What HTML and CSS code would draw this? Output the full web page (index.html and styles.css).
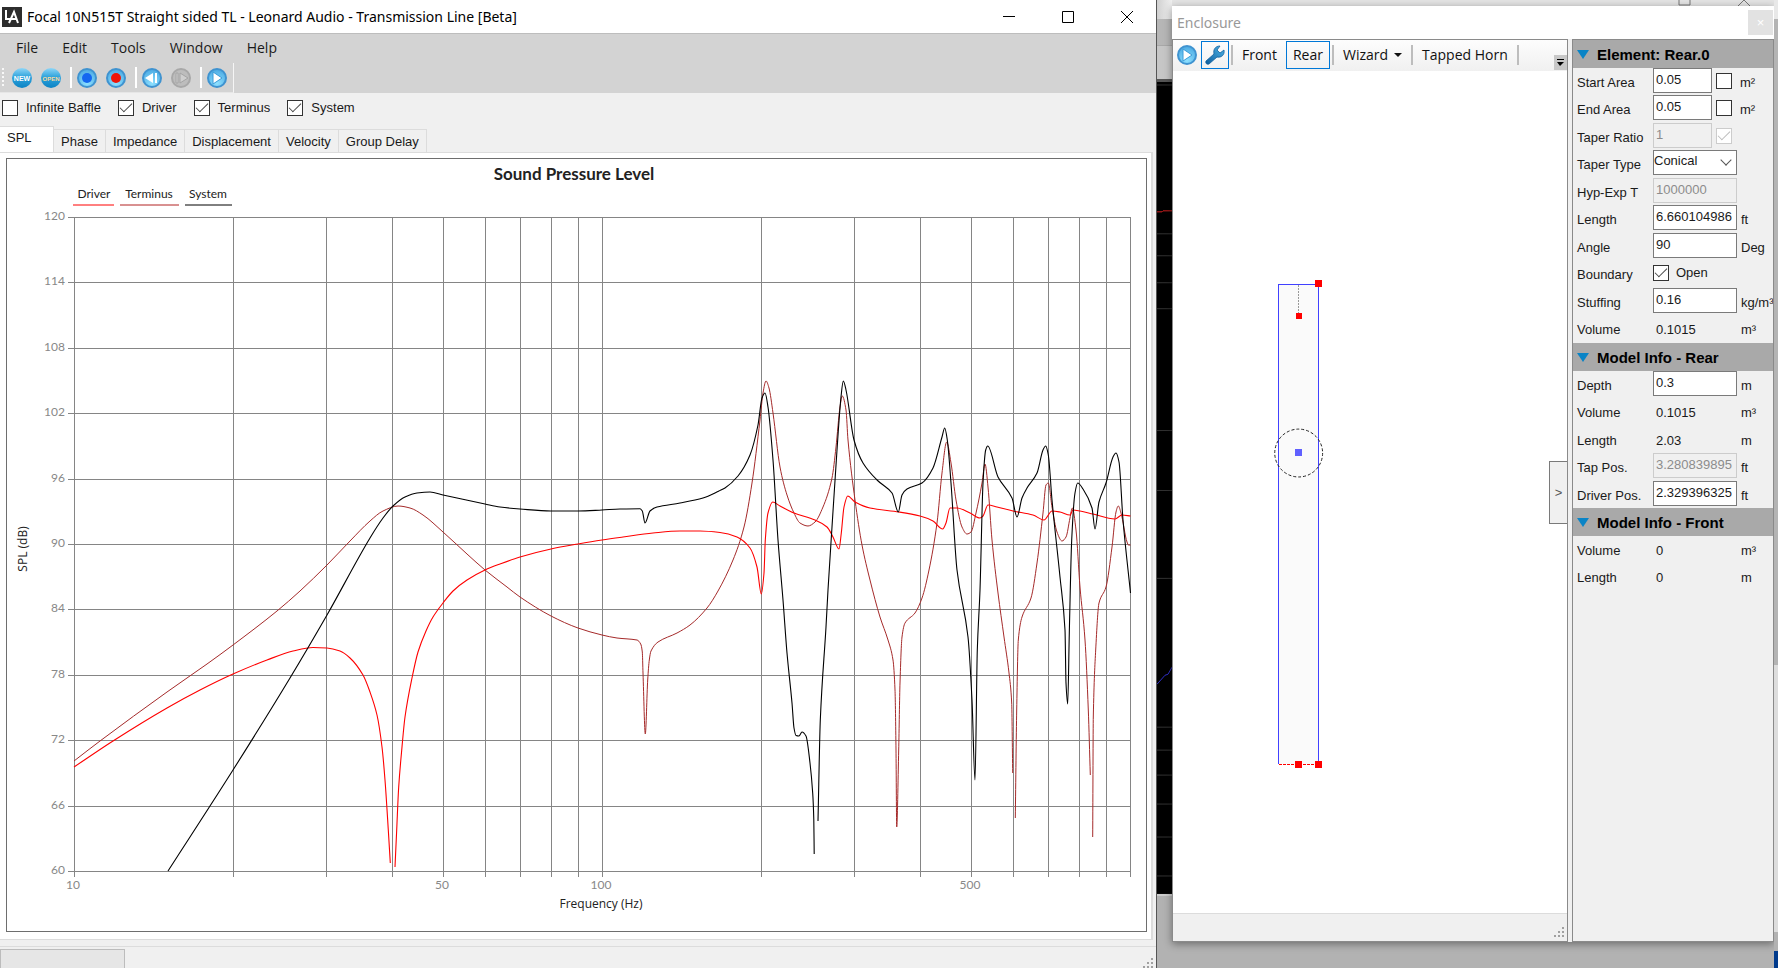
FILE: index.html
```html
<!DOCTYPE html>
<html lang="en">
<head>
    <meta charset="UTF-8">
    <meta name="viewport" content="width=device-width, initial-scale=1.0">
    <title>Leonard Audio - Transmission Line</title>
    <link rel="stylesheet" href="styles.css">
</head>
<body>
    <!-- shared gradients for the round toolbar icons -->
    <svg class="defs" aria-hidden="true">
        <defs>
            <linearGradient id="g-solid" x1="0" y1="0" x2="0" y2="1">
                <stop offset="0" stop-color="#8fd6f7"/>
                <stop offset="0.45" stop-color="#2fa3dc"/>
                <stop offset="1" stop-color="#0c83c4"/>
            </linearGradient>
            <radialGradient id="g-light" cx="0.5" cy="0.8" r="0.8">
                <stop offset="0" stop-color="#8ee0ff"/>
                <stop offset="1" stop-color="#4aa9e2"/>
            </radialGradient>
            <linearGradient id="g-wrench" x1="0" y1="1" x2="1" y2="0">
                <stop offset="0" stop-color="#0d5c9c"/>
                <stop offset="1" stop-color="#4fb4e6"/>
            </linearGradient>
        </defs>
    </svg>

    <div class="desktop">
        <main class="window main-window">
            <header class="title-bar">
                <svg class="app-icon" viewBox="0 0 20 20">
                    <rect width="20" height="20" fill="#2d2d2d"/>
                    <path d="M4 3v9h5M7 16l5-11 4 11M9 12h6" fill="none" stroke="#fff" stroke-width="2"/>
                </svg>
                <h1>Focal 10N515T Straight sided TL - Leonard Audio - Transmission Line [Beta]</h1>
                <div class="caption-buttons">
                    <button aria-label="Minimize"><svg viewBox="0 0 14 14"><path d="M1 6.500h12"/></svg></button>
                    <button aria-label="Maximize"><svg viewBox="0 0 14 14"><path d="M1.500 1.500h11v11h-11z"/></svg></button>
                    <button aria-label="Close"><svg viewBox="0 0 14 14"><path d="M1 1l12 12M13 1L1 13"/></svg></button>
                </div>
            </header>

            <nav class="menu-bar">
                <button>File</button>
                <button>Edit</button>
                <button>Tools</button>
                <button>Window</button>
                <button>Help</button>
            </nav>

            <div class="tool-area">
                <div class="tool-strip">
                    <span class="grip"></span>
                    <button aria-label="New">
                        <svg viewBox="0 0 20 20"><circle cx="10" cy="10" r="10" fill="url(#g-solid)"/><text x="10" y="13" class="icon-text">NEW</text></svg>
                    </button>
                    <button aria-label="Open">
                        <svg viewBox="0 0 20 20"><circle cx="10" cy="10" r="10" fill="url(#g-solid)"/><text x="10" y="13" class="icon-text open">OPEN</text></svg>
                    </button>
                    <span class="separator"></span>
                    <button aria-label="Stop">
                        <svg viewBox="0 0 20 20"><circle cx="10" cy="10" r="9" fill="url(#g-light)" stroke="#3f93d0" stroke-width="2"/><circle cx="10" cy="10" r="5" fill="#1467f0"/></svg>
                    </button>
                    <button aria-label="Record">
                        <svg viewBox="0 0 20 20"><circle cx="10" cy="10" r="9" fill="url(#g-light)" stroke="#3f93d0" stroke-width="2"/><circle cx="10" cy="10" r="5" fill="#ee1408"/></svg>
                    </button>
                    <span class="separator"></span>
                    <button aria-label="Step back">
                        <svg viewBox="0 0 20 20"><circle cx="10" cy="10" r="9" fill="url(#g-light)" stroke="#3f93d0" stroke-width="2"/><path d="M3 10l8-5v10zM13 5h2v10h-2z" fill="#fff"/></svg>
                    </button>
                    <button aria-label="Step forward" disabled>
                        <svg viewBox="0 0 20 20"><circle cx="10" cy="10" r="9" fill="#bdbdbd" stroke="#a8a8a8" stroke-width="2"/><path d="M9 5l8 5-8 5zM5 5h2v10H5z" fill="#cfcfcf" stroke="#a4a4a4"/></svg>
                    </button>
                    <span class="separator"></span>
                    <button aria-label="Play">
                        <svg viewBox="0 0 20 20"><circle cx="10" cy="10" r="9" fill="url(#g-light)" stroke="#3f93d0" stroke-width="2"/><path d="M6 4l9 6-9 6z" fill="#fff" stroke="#3a9bd8"/></svg>
                    </button>
                </div>
            </div>

            <div class="trace-options">
                <label><input type="checkbox">Infinite Baffle</label>
                <label><input type="checkbox" checked>Driver</label>
                <label><input type="checkbox" checked>Terminus</label>
                <label><input type="checkbox" checked>System</label>
            </div>

            <div class="tabs" role="tablist">
                <button role="tab" aria-selected="true" class="active">SPL</button>
                <button role="tab">Phase</button>
                <button role="tab">Impedance</button>
                <button role="tab">Displacement</button>
                <button role="tab">Velocity</button>
                <button role="tab">Group Delay</button>
            </div>

            <section class="tab-page">
                <div class="chart-frame">
                    <svg id="chart" viewBox="7 159 1139 772">
                        <text class="chart-title" x="574" y="180">Sound Pressure Level</text>
                        <g class="legend">
                            <text x="94" y="198">Driver</text>
                            <text x="149" y="198">Terminus</text>
                            <text x="208" y="198">System</text>
                            <path d="M73 205h41" stroke="#ff0000"/>
                            <path d="M120 205h59" stroke="#b22222"/>
                            <path d="M185 205h47" stroke="#000000"/>
                        </g>
                        <g id="grid"></g>
                        <g id="traces"></g>
                        <text class="axis-title" x="601" y="908">Frequency (Hz)</text>
                        <text class="axis-title" x="0" y="0" transform="translate(27 549) rotate(-90)">SPL (dB)</text>
                    </svg>
                </div>
            </section>

            <footer class="status-bar">
                <span class="progress"></span>
                <svg class="size-grip" viewBox="0 0 12 12"><path d="M9 1h2v2H9zM5 5h2v2H5zM9 5h2v2H9zM1 9h2v2H1zM5 9h2v2H5zM9 9h2v2H9z"/></svg>
            </footer>
        </main>

        <!-- slice of the analyser window that shows between the two windows -->
        <div class="analyser">
            <div class="analyser-title"></div>
            <div class="analyser-bar"></div>
            <svg viewBox="0 82 15 813" preserveAspectRatio="none">
                <rect y="82" width="15" height="813" fill="#000"/>
                <path d="M0 85h15M0 234h15M0 256h15M0 283h15M0 309h15M0 431h15M0 491h15M0 579h15M0 728h15M0 751h15M0 776h15M0 805h15M0 838h15M0 877h15" stroke="#333"/>
                <path d="M0 212h5l1-1h9" stroke="#d02020" fill="none"/>
                <path d="M0 685l8-9 3-1 4-7" stroke="#3030c8" fill="none"/>
            </svg>
        </div>

        <div class="enclosure-column">
            <div class="behind-title">
                <svg viewBox="0 0 72 6"><path d="M1 0v5h11V0M60 6l6-6 6 6" fill="none" stroke="#777"/></svg>
            </div>
            <aside class="window enclosure">
                <header class="title-bar">
                    <h2>Enclosure</h2>
                    <button class="ghost-close" aria-label="Close">×</button>
                </header>
                <div class="enclosure-body">
                    <div class="model-pane">
                        <div class="model-tools">
                            <button class="icon" aria-label="Run">
                                <svg viewBox="0 0 20 20"><circle cx="10" cy="10" r="9" fill="url(#g-light)" stroke="#3f93d0" stroke-width="2"/><path d="M6 4l9 6-9 6z" fill="#fff" stroke="#3a9bd8"/></svg>
                            </button>
                            <button class="icon selected" aria-label="Settings">
                                <svg viewBox="0 0 20 20"><path d="M1 16L9 9C8 5 10 1 15 1L12 5l3 3 4-3c1 5-3 8-7 7l-8 7c-2 1-4-1-3-3z" fill="url(#g-wrench)" stroke="#0f5f9e" stroke-width="0.800"/></svg>
                            </button>
                            <span class="separator"></span>
                            <button>Front</button>
                            <button class="selected">Rear</button>
                            <span class="separator"></span>
                            <button class="menu">Wizard<span class="caret"></span></button>
                            <span class="separator"></span>
                            <button>Tapped Horn</button>
                            <span class="separator"></span>
                            <button class="overflow" aria-label="More"><svg viewBox="0 0 13 15"><path d="M3 4h7v1H3zM3 7h7l-4 4z"/></svg></button>
                        </div>
                        <div class="model-canvas">
                            <svg viewBox="1173 70 395 842" preserveAspectRatio="xMinYMin meet">
                                <rect x="1279" y="284" width="40" height="481" fill="#fafafa"/>
                                <path d="M1279 765V284H1319V765" fill="none" stroke="#4040ff"/>
                                <path d="M1279 765h40" stroke="#ff0000" stroke-dasharray="3 1"/>
                                <path d="M1299 285v28" stroke="#999" stroke-dasharray="2 1"/>
                                <circle cx="1299" cy="453" r="24" fill="none" stroke="#222" stroke-dasharray="3 2"/>
                                <g fill="#ff0000">
                                    <rect x="1315" y="280" width="7" height="7"/>
                                    <rect x="1296" y="313" width="6" height="6"/>
                                    <rect x="1295" y="762" width="7" height="7"/>
                                    <rect x="1315" y="762" width="7" height="7"/>
                                </g>
                                <rect x="1295" y="449" width="7" height="7" fill="#6060ff"/>
                            </svg>
                            <button class="expander" aria-label="Expand">&gt;</button>
                        </div>
                        <footer class="model-status">
                            <svg class="size-grip" viewBox="0 0 12 12"><path d="M9 1h2v2H9zM5 5h2v2H5zM9 5h2v2H9zM1 9h2v2H1zM5 9h2v2H5zM9 9h2v2H9z"/></svg>
                        </footer>
                    </div>

                    <form class="properties">
                        <h3><span class="fold"></span>Element: Rear.0</h3>
                        <div class="rows">
                            <div class="row"><label for="start">Start Area</label><input id="start" class="short" value="0.05"><input type="checkbox" aria-label="Lock start area"><span class="unit">m²</span></div>
                            <div class="row"><label for="end">End Area</label><input id="end" class="short" value="0.05"><input type="checkbox" aria-label="Lock end area"><span class="unit">m²</span></div>
                            <div class="row"><label for="ratio">Taper Ratio</label><input id="ratio" class="short" value="1" disabled><input type="checkbox" aria-label="Lock taper ratio" checked disabled></div>
                            <div class="row"><label for="type">Taper Type</label><span class="select"><select id="type"><option>Conical</option></select></span></div>
                            <div class="row"><label for="hyp">Hyp-Exp T</label><input id="hyp" value="1000000" disabled></div>
                            <div class="row"><label for="length">Length</label><input id="length" value="6.660104986"><span class="unit">ft</span></div>
                            <div class="row"><label for="angle">Angle</label><input id="angle" value="90"><span class="unit">Deg</span></div>
                            <div class="row"><label for="open">Boundary</label><input type="checkbox" id="open" checked><label class="tick-label" for="open">Open</label></div>
                            <div class="row"><label for="stuffing">Stuffing</label><input id="stuffing" value="0.16"><span class="unit">kg/m³</span></div>
                            <div class="row"><span class="name">Volume</span><output>0.1015</output><span class="unit">m³</span></div>
                        </div>
                        <h3><span class="fold"></span>Model Info - Rear</h3>
                        <div class="rows">
                            <div class="row"><label for="depth">Depth</label><input id="depth" value="0.3"><span class="unit">m</span></div>
                            <div class="row"><span class="name">Volume</span><output>0.1015</output><span class="unit">m³</span></div>
                            <div class="row"><span class="name">Length</span><output>2.03</output><span class="unit">m</span></div>
                            <div class="row"><label for="tap">Tap Pos.</label><input id="tap" value="3.280839895" disabled><span class="unit">ft</span></div>
                            <div class="row"><label for="driver-pos">Driver Pos.</label><input id="driver-pos" value="2.329396325"><span class="unit">ft</span></div>
                        </div>
                        <h3><span class="fold"></span>Model Info - Front</h3>
                        <div class="rows">
                            <div class="row"><span class="name">Volume</span><output>0</output><span class="unit">m³</span></div>
                            <div class="row"><span class="name">Length</span><output>0</output><span class="unit">m</span></div>
                        </div>
                    </form>
                </div>
            </aside>
        </div>

        <div class="right-edge"></div>
    </div>

    <script src="chart.js"></script>
</body>
</html>
```
FILE: chart.js
```js
const NS = 'http://www.w3.org/2000/svg';
const plot = { left: 74, right: 1130, top: 217, bottom: 871 };

function add(parent, tag, attrs, text) {
    const el = document.createElementNS(NS, tag);
    for (const key in attrs) {
        el.setAttribute(key, attrs[key]);
    }
    if (text !== undefined) {
        el.textContent = text;
    }
    parent.appendChild(el);
}

// Log frequency scale, 10 Hz to 1 kHz
function freqToX(f) {
    return Math.round(plot.left + (plot.right - plot.left) * Math.log10(f / 10) / 2);
}

function dbToY(db) {
    return Math.round(plot.bottom - (plot.bottom - plot.top) * (db - 60) / 60);
}

function drawGrid() {
    const grid = document.getElementById('grid');
    for (let db = 60; db <= 120; db += 6) {
        const y = dbToY(db);
        add(grid, 'path', { d: `M${plot.left - 6} ${y}H${plot.right}` });
        add(grid, 'text', { x: 65, y: y + 3, class: 'y-label' }, db);
    }
    for (const decade of [10, 100]) {
        for (let i = 1; i < 10; i++) {
            const x = freqToX(decade * i);
            add(grid, 'path', { d: `M${x} ${plot.top}V${plot.bottom + 6}` });
            if (i === 1 || i === 5) {
                add(grid, 'text', { x: x - 1, y: 889, class: 'x-label' }, decade * i);
            }
        }
    }
    add(grid, 'path', { d: `M${plot.right} ${plot.top}V${plot.bottom + 6}` });
}

// Monotone cubic through the points so the notches do not overshoot
function smooth(points) {
    const n = points.length;
    const slope = [];
    for (let i = 0; i < n - 1; i++) {
        slope.push((points[i + 1][1] - points[i][1]) / (points[i + 1][0] - points[i][0]));
    }
    const tangent = [slope[0]];
    for (let i = 1; i < n - 1; i++) {
        const a = slope[i - 1], b = slope[i];
        tangent.push(a * b <= 0 ? 0 : 2 * a * b / (a + b));
    }
    tangent.push(slope[n - 2]);
    let d = `M${points[0][0]} ${points[0][1]}`;
    for (let i = 0; i < n - 1; i++) {
        const [x0, y0] = points[i];
        const [x1, y1] = points[i + 1];
        const h = (x1 - x0) / 3;
        d += `C${x0 + h} ${y0 + tangent[i] * h} ${x1 - h} ${y1 - tangent[i + 1] * h} ${x1} ${y1}`;
    }
    return d;
}

// Each string is one unbroken run of x,y points
const traces = [
    { color: '#a52a2a', width: 1, runs: [
        '74,761 100,741 167,692 207,664 233,645 277,611 300,591 327,565 350,541 370,521 383,511 398,506 410,508 423,515 443,532 467,554 485,570 507,587 520,597 551,616 578,628 602,635 617,638 637,640 640.7,644 642.3,652 643,673 645.3,734 647.7,680 649.3,660 651,651 658,642 677,633 690,625 707,608 718,591 733,560 744,527 752,483 760,420 763,393 766,381 769,388 773,413 780,467 787,495 794,513 800,523 808,526 815,522 823,507 832,478 836,447 840,407 842.3,396 846,410 848,440 855,500 862,545 870,580 880,617 888,640 893,660 895,690 896,750 896.7,827 898.7,750 900,683 902,637 905,623 915,613 922,598 929,570 937,523 942,473 946.7,442 951,463 956,500 962,527 967,534 971,532 976,513 982,483 985,464 988,487 992,540 998,593 1004,637 1009,673 1011.7,703 1012.7,773',
        '1015.3,818 1016.7,710 1018.3,640 1022,617 1031,598 1037,563 1043,513 1046,485 1048.3,483 1052,507 1057,532 1062,541 1066,537 1070,518 1072.3,508 1076,530 1080,587 1085,640 1088.3,710 1090.3,775',
        '1092.7,837 1093.3,717 1095.7,650 1099,603 1106,587 1112,547 1116,512 1118.3,506 1121,513 1127,542 1128.5,545 1130.5,545'
    ] },
    { color: '#ff0000', width: 1.1, runs: [
        '74,767 113,741 167,708 200,690 233,674 267,660 293,651 313,647.5 327,648 340,651 350,658 363,675 370,692 377,715 382,747 385,780 388.3,830 390.3,863',
        '395,867 396.7,830 398.7,787 402,747 405,717 412,678 418,652 426,631 433,617 443,603 453,591 467,580 485,570 500,564 520,557 551,549 578,544 602,540 623,537 653,533 680,531 700,531 720,532.5 737,537 750,548 757,567 761.3,594 764,573 765.3,540 768,513 772.7,502 780,506 794,513 815,520 827,527 833,537 839,549 841.3,533 844,507 847.7,496 855,502 870,508 899,512 920,516 933,521 942.7,529 946,523 950,508 957,508 970,513 980,518 983,516 988,505 997,507 1013,511 1033,515 1044,520 1052,511 1060,512 1070,515 1073,510 1080,511 1093,514 1115,519 1122,515 1130.5,516'
    ] },
    { color: '#000000', width: 1.1, runs: [
        '168,871 233,770 290,678 327,615 370,538 383,518 393,506 405,497 417,493 430,492 443,495 485,504 500,507 520,509 551,511 578,511 602,510 620,509 640,508.7 642.3,511 645,523 650,511 657,507 680,503 703,498 719,491 725,488 738,476 750,455 758,425 762,398 765,393 768,407 773,460 778,540 783,600 787,653 792,703 794,728 796,735.5 799,736 802,732 806,736 810,763 812.7,793 813.8,820 814.2,854',
        '818,821 820.3,720 826,627 828,590 832,527 837,450 841,397 843.3,381 846,390 854,440 863,463 877,480 892,493 898.3,512 902,495 907,489 922,483 933,468 942,437 944.7,428 947.3,440 951,483 957,570 968,637 972,700 975,780 977.3,650 980,590 983,483 985.7,450 987.7,446 998,477 1012,498 1017,517 1022,498 1027,488 1037,473 1043,450 1045.7,446 1048.3,455 1052,500 1060,577 1065,630 1066,683 1067.7,704 1069.3,633 1071.7,540 1075,493 1077.7,483 1083,489 1092,508 1095,529 1099,502 1106,483 1113,457 1116,453 1119,462 1123,520 1130.5,593'
    ] }
];

function drawTraces() {
    const group = document.getElementById('traces');
    for (const trace of traces) {
        for (const run of trace.runs) {
            const points = run.split(' ').map(p => p.split(',').map(Number));
            add(group, 'path', { d: smooth(points), stroke: trace.color, 'stroke-width': trace.width });
        }
    }
}

drawGrid();
drawTraces();
```
FILE: styles.css
```css
* {
    box-sizing: border-box;
}

body {
    margin: 0;
    background: #b2b2b2;
    color: #1a1a1a;
    font: 13px "Liberation Sans", Arial, sans-serif;
    overflow: hidden;
}

h1, h2, h3 {
    margin: 0;
    font-weight: normal;
}

button {
    border: 1px solid transparent;
    padding: 0;
    background: none;
    color: inherit;
    font: inherit;
}

.defs {
    position: absolute;
    width: 0;
    height: 0;
}

.desktop {
    display: grid;
    grid-template-columns: minmax(0, 1157fr) 15px minmax(0, 602fr) 4px;
    height: 100vh;
}

.window {
    display: flex;
    flex-direction: column;
    background: #f0f0f0;
}

.title-bar {
    display: flex;
    align-items: center;
    background: #fff;
}

.title-bar h1, .title-bar h2 {
    flex: 1;
    font: 14px "Noto Sans", "Open Sans", sans-serif;
    white-space: nowrap;
}

.separator {
    flex: none;
    width: 2px;
}

/* Main window */
.main-window {
    border-right: 1px solid #555;
}

.main-window .title-bar {
    height: 33px;
    padding-left: 2px;
}

.main-window h1 {
    color: #000;
}

.app-icon {
    width: 20px;
    height: 20px;
    margin-right: 5px;
}

.caption-buttons {
    display: flex;
}

.caption-buttons button {
    display: grid;
    place-items: center;
    width: 59px;
    height: 32px;
}

.caption-buttons svg {
    width: 14px;
    height: 14px;
    fill: none;
    stroke: #000;
}

.menu-bar {
    display: flex;
    gap: 22px;
    height: 30px;
    padding: 0 15px 2px;
    border-top: 1px solid #bdbdbd;
    background: #d3d3d3;
    font: 14px "Open Sans", sans-serif;
}

.tool-area {
    height: 30px;
    background: #d3d3d3;
}

.tool-strip {
    display: flex;
    align-items: center;
    gap: 9px;
    width: 234px;
    height: 30px;
    padding-left: 2px;
    border-right: 1px solid #f5f5f5;
    border-bottom: 1px solid #e6e6e6;
}

.tool-strip button {
    flex: none;
    width: 20px;
    height: 20px;
    border: 0;
}

.tool-strip svg {
    display: block;
    width: 20px;
    height: 20px;
}

.tool-strip .separator {
    height: 21px;
    margin-right: -5px;
    background: #fff;
}

.tool-strip .separator + button {
    margin-left: 1px;
}

.grip {
    width: 2px;
    height: 20px;
    margin-right: -1px;
    background: repeating-linear-gradient(#f8f8f8 0 2px, transparent 2px 4px);
}

.icon-text {
    fill: #fff;
    font: bold 7px "Liberation Sans", sans-serif;
    text-anchor: middle;
}

.icon-text.open {
    fill: #f5d9a0;
    font-size: 6px;
}

/* Check boxes */
input[type="checkbox"] {
    appearance: none;
    flex: none;
    display: grid;
    place-items: center;
    width: 16px;
    height: 16px;
    margin: 0;
    border: 1px solid #333;
    background: #fff;
}

input[type="checkbox"]:checked::before {
    content: "";
    width: 11px;
    height: 5px;
    margin-top: -4px;
    border: solid #444;
    border-width: 0 0 1px 1px;
    transform: rotate(-45deg);
}

input[type="checkbox"]:disabled {
    border-color: #ccc;
}

input[type="checkbox"]:disabled::before {
    border-color: #bbb;
}

.trace-options {
    display: flex;
    gap: 17px;
    height: 33px;
    padding: 6px 2px 0;
}

.trace-options label {
    display: flex;
    gap: 8px;
    height: 17px;
    align-items: center;
}

/* Tabs */
.tabs {
    display: flex;
    align-items: flex-end;
    height: 26px;
}

.tabs button {
    height: 23px;
    padding: 0 7px;
    border: 1px solid #dcdcdc;
    border-width: 1px 1px 0 0;
}

.tabs .active {
    width: 54px;
    height: 26px;
    padding-bottom: 4px;
    background: #fff;
    text-align: left;
}

.tab-page {
    flex: 1;
    min-height: 0;
    margin-right: 3px;
    padding: 5px 4px 7px 6px;
    border: solid #dcdcdc;
    border-width: 1px 2px 1px 0;
    background: #fff;
}

.chart-frame {
    height: 100%;
    border: 1px solid #6e6e6e;
}

#chart {
    display: block;
    width: 100%;
    height: 100%;
    font: 12px Lato, sans-serif;
}

#chart text {
    fill: #222;
    text-anchor: middle;
}

#chart .chart-title {
    font-size: 17px;
    font-weight: bold;
}

#chart .axis-title {
    font-family: "Open Sans", sans-serif;
}

#chart .y-label {
    fill: #888;
    text-anchor: end;
}

#chart .x-label {
    fill: #888;
}

#grid path {
    stroke: #858585;
    shape-rendering: crispEdges;
}

#traces path {
    fill: none;
    stroke-linejoin: round;
}

.status-bar {
    display: flex;
    height: 23px;
    margin-top: 6px;
    padding-top: 2px;
    border-top: 1px solid #dcdcdc;
}

.progress {
    width: 125px;
    border: 1px solid #bcbcbc;
    background: #e6e6e6;
}

.size-grip {
    width: 12px;
    height: 12px;
    margin: auto 2px 0 auto;
    fill: #a0a0a0;
}

/* Window behind */
.analyser {
    display: flex;
    flex-direction: column;
}

.analyser-title {
    height: 19px;
    background: linear-gradient(90deg, #d0d0d0, #f0f0f0);
}

.analyser-bar {
    height: 63px;
    border-bottom: 3px solid #555;
    background: linear-gradient(#b6b6b6 26px, #a8a8a8 26px, #a8a8a8 27px, #c6c6c6 27px);
}

.analyser svg {
    width: 15px;
    flex: 0 1 84%;
    border-bottom: 2px solid #ccc;
}

.enclosure-column {
    display: flex;
    flex-direction: column;
    min-width: 0;
}

.behind-title {
    display: flex;
    justify-content: flex-end;
    height: 6px;
    padding-right: 24px;
    background: #e4e4e4;
}

.behind-title svg {
    width: 72px;
    height: 6px;
}

/* Enclosure window */
.enclosure {
    flex: 1;
    min-height: 0;
    margin-bottom: 27px;
    box-shadow: 0 2px 8px rgba(0, 0, 0, 0.4);
}

.enclosure .title-bar {
    height: 33px;
    padding-left: 5px;
}

.enclosure h2 {
    color: #999;
}

.ghost-close {
    align-self: flex-start;
    width: 25px;
    height: 25px;
    margin: 4px 1px 0 0;
    background: #e2e2e2;
    color: #fff;
}

.enclosure-body {
    flex: 1;
    display: flex;
    gap: 4px;
    min-height: 0;
}

.model-pane {
    flex: 1;
    display: flex;
    flex-direction: column;
    min-width: 0;
    border: 1px solid #8a8a8a;
}

.model-tools {
    display: flex;
    align-items: center;
    gap: 2px;
    height: 31px;
    padding: 0 0 1px 2px;
    background: linear-gradient(#fdfdfd, #f0f0f0);
    color: #111;
    font: 14px "Open Sans", sans-serif;
}

.model-tools button {
    height: 28px;
    padding: 0 6px 1px;
    white-space: nowrap;
}

.model-tools .icon {
    display: grid;
    place-items: center;
    width: 28px;
    padding: 0;
}

.model-tools .icon:first-child {
    width: 24px;
}

.model-tools .icon svg {
    width: 20px;
    height: 20px;
}

.model-tools .selected {
    border-color: #0078d7;
}

.model-tools .separator {
    height: 20px;
    background: #bdbdbd;
}

.caret {
    display: inline-block;
    margin: 0 0 3px 6px;
    border: solid transparent;
    border-top-color: #111;
    border-width: 4px 4px 0;
}

.model-tools .overflow {
    align-self: flex-end;
    width: 13px;
    height: 15px;
    margin-left: auto;
    padding: 0;
    border: 0;
    background: #c8c8c8;
}

.overflow svg {
    display: block;
}

.model-canvas {
    position: relative;
    flex: 1;
    min-height: 0;
    background: #fff;
}

.model-canvas svg {
    display: block;
    width: 100%;
    height: 100%;
    shape-rendering: crispEdges;
}

.model-canvas circle {
    shape-rendering: auto;
}

/* Drawer handle over the right side of the canvas */
.expander {
    position: absolute;
    top: 390px;
    right: 0;
    width: 18px;
    height: 63px;
    border: 1px solid #7a7a7a;
    border-right: 0;
    background: #f0f0f0;
    color: #555;
}

.model-status {
    display: flex;
    height: 28px;
    padding-bottom: 3px;
    border-top: 1px solid #dcdcdc;
}

/* Property list */
.properties {
    flex: none;
    width: 202px;
    border: 1px solid #8a8a8a;
    overflow: hidden;
}

.properties h3 {
    display: flex;
    align-items: center;
    gap: 8px;
    height: 28px;
    padding-left: 4px;
    background: #a9a9a9;
    color: #000;
    font-size: 15px;
    font-weight: bold;
}

.fold {
    border: solid transparent;
    border-top-color: #0a84c6;
    border-width: 9px 6px 0;
}

.row {
    display: flex;
    align-items: flex-start;
    height: 27px;
    padding-left: 4px;
    line-height: 30px;
    white-space: nowrap;
}

.row:nth-child(even) {
    height: 28px;
}

.row > label:first-child, .row .name {
    flex: none;
    width: 76px;
}

.row input:not([type="checkbox"]), .row select, .row output {
    flex: none;
    width: 84px;
    height: 25px;
    padding: 0 0 2px 2px;
    border: 1px solid #7a7a7a;
    border-radius: 0;
    background: #fff;
    color: #1a1a1a;
    font: inherit;
}

.row input.short {
    width: 59px;
    margin-right: 4px;
}

.row input:disabled:not([type="checkbox"]) {
    border-color: #ccc;
    background: #f0f0f0;
    color: #8c8c8c;
}

.row output {
    height: 28px;
    border-color: transparent;
    background: none;
    line-height: 28px;
}

.row input[type="checkbox"] {
    margin-top: 5px;
}

.select {
    position: relative;
}

.row .select select {
    display: block;
    appearance: none;
    padding: 0 0 4px;
    line-height: 19px;
}

.select::after {
    content: "";
    position: absolute;
    top: 6px;
    right: 7px;
    width: 7px;
    height: 7px;
    border: solid #555;
    border-width: 0 1px 1px 0;
    transform: rotate(45deg);
    pointer-events: none;
}

.unit {
    margin-left: 4px;
}

.tick-label {
    margin-left: 7px;
    line-height: 25px;
}

input[type="checkbox"] + .unit {
    margin-left: 8px;
}

.right-edge {
    background: linear-gradient(#e8e8e8 19px, #b4b4b4 19px, #b4b4b4 665px, #ddd 665px, #ddd 932px, #b2b2b2 932px, #b2b2b2 951px, #003a8c 951px);
}
```
